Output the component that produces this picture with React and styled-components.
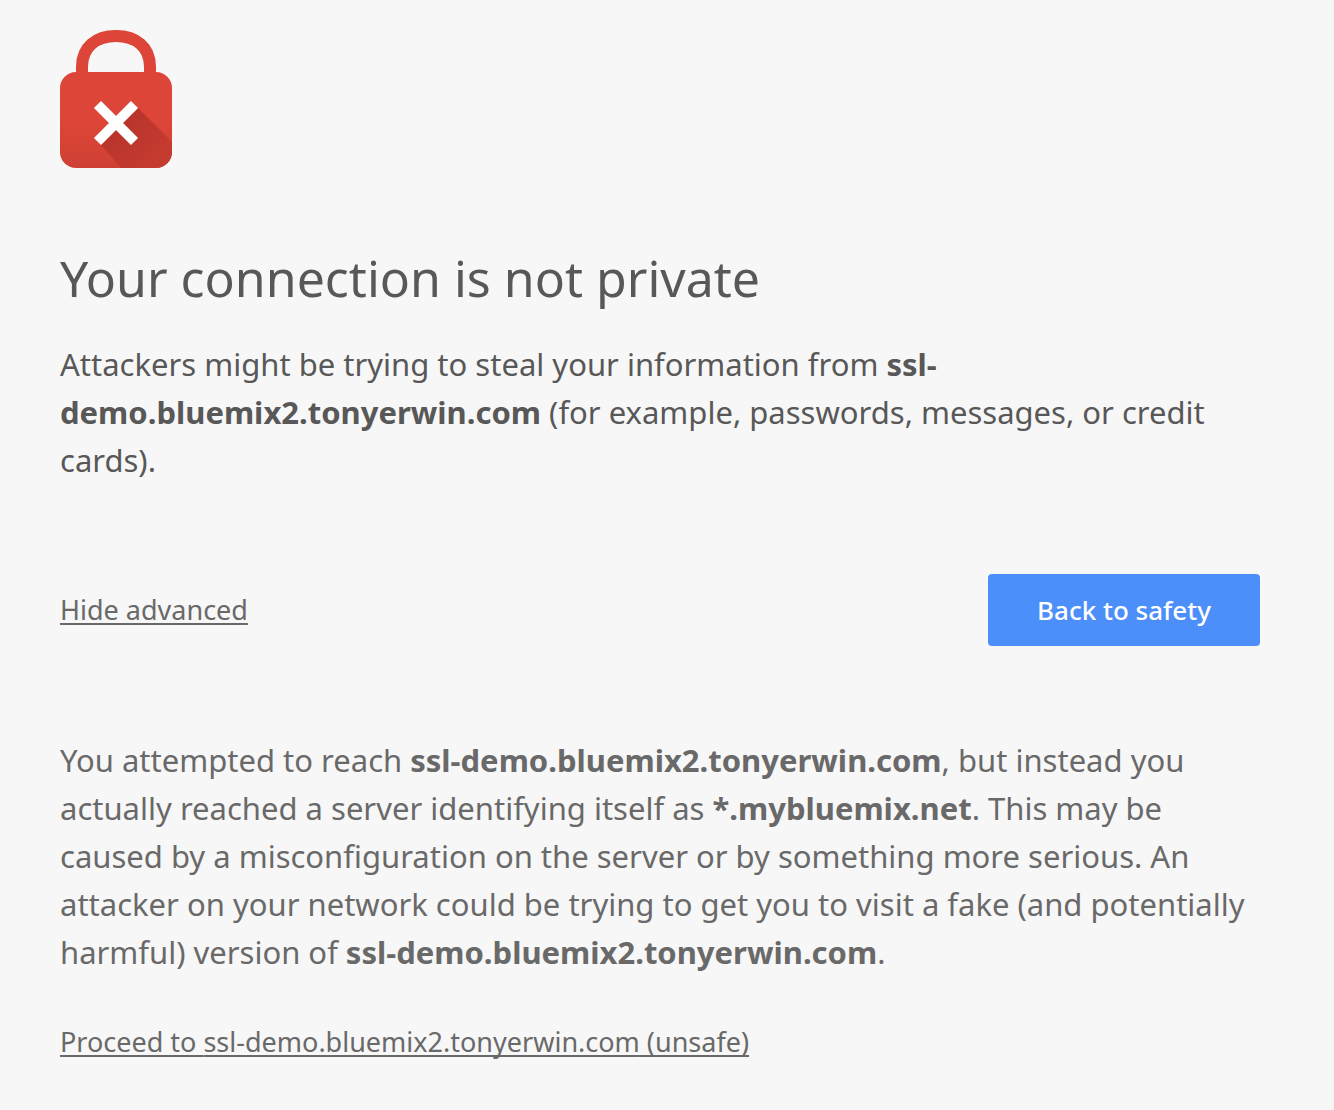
import React, { useState } from "react";
import styled, { createGlobalStyle, css } from "styled-components";

const GlobalStyle = createGlobalStyle`
  * {
    box-sizing: border-box;
  }

  body {
    margin: 0;
    background: #f7f7f7;
    color: #585858;
    font-family: "Noto Sans", "Open Sans", sans-serif;
    font-size: 31px;
    line-height: 48px;
  }
`;

const Page = styled.main`
  display: flex;
  flex-direction: column;
  align-items: flex-start;
  max-width: 1334px;
  padding: 30px 74px 40px 60px;
`;

const LockIcon = styled.svg`
  display: block;
  width: 112px;
  height: 138px;
`;

const Title = styled.h1`
  margin: 80px 0 32px;
  font-size: 50px;
  font-weight: 400;
  line-height: 60px;
`;

const Message = styled.p`
  margin: 0;
  color: ${({ $muted }) => ($muted ? "#696969" : "inherit")};
`;

const Actions = styled.div`
  display: flex;
  align-items: baseline;
  justify-content: space-between;
  align-self: stretch;
  margin: 90px 0;
`;

const linkText = css`
  color: #696969;
  font-size: 27px;
  text-decoration: underline;
  text-decoration-thickness: 2px;
  text-decoration-skip-ink: none;
  text-underline-offset: 3px;
`;

const TextButton = styled.button`
  padding: 0;
  border: 0;
  background: none;
  font: inherit;
  cursor: pointer;
  ${linkText}
`;

const PrimaryButton = styled.button`
  min-width: 272px;
  height: 72px;
  padding: 0 40px;
  border: 0;
  border-radius: 4px;
  background: #4c8efa;
  color: #fff;
  font: inherit;
  font-size: 26px;
  font-weight: 500;
  cursor: pointer;
`;

const Details = styled.section`
  display: flex;
  flex-direction: column;
  align-items: flex-start;
  gap: 42px;
`;

const ProceedLink = styled.a`
  ${linkText}
`;

const HOST = "ssl-demo.bluemix2.tonyerwin.com";

function BrokenLock() {
  return (
    <LockIcon viewBox="0 0 112 138" role="img" aria-label="Not secure">
      <defs>
        <linearGradient id="body" x1="0" y1="0" x2="0" y2="1">
          <stop offset="0.5" stopColor="#dd4538" />
          <stop offset="1" stopColor="#cf4034" />
        </linearGradient>
        <linearGradient id="shade" gradientUnits="userSpaceOnUse" x1="50" y1="90" x2="94" y2="134">
          <stop offset="0" stopColor="#b53329" />
          <stop offset="1" stopColor="#c63b30" />
        </linearGradient>
        <clipPath id="bodyClip">
          <rect y="42" width="112" height="96" rx="16" />
        </clipPath>
      </defs>
      <path
        d="M22 46V37C22 17 36 6 56 6s34 11 34 31v9"
        fill="none"
        stroke="#dd4538"
        strokeWidth="12"
      />
      <rect y="42" width="112" height="96" rx="16" fill="url(#body)" />
      <g clipPath="url(#bodyClip)">
        <path d="M78 78L114 114V140H63L41 115Z" fill="url(#shade)" />
      </g>
      <path d="M37.500 74.500L74.500 111.500M74.500 74.500L37.500 111.500" stroke="#fff" strokeWidth="10" />
    </LockIcon>
  );
}

export default function App() {
  const [open, setOpen] = useState(true);

  return (
    <>
      <GlobalStyle />
      <Page>
        <BrokenLock />
        <Title>Your connection is not private</Title>
        <Message>
          Attackers might be trying to steal your information from <strong>{HOST}</strong> (for
          example, passwords, messages, or credit cards).
        </Message>
        <Actions>
          <TextButton type="button" aria-expanded={open} onClick={() => setOpen(!open)}>
            {open ? "Hide advanced" : "Advanced"}
          </TextButton>
          <PrimaryButton type="button">Back to safety</PrimaryButton>
        </Actions>
        {open && (
          <Details>
            <Message $muted>
              You attempted to reach <strong>{HOST}</strong>, but instead you actually reached a
              server identifying itself as <strong>*.mybluemix.net</strong>. This may be caused by
              a misconfiguration on the server or by something more serious. An attacker on your
              network could be trying to get you to visit a fake (and potentially harmful) version
              of <strong>{HOST}</strong>.
            </Message>
            <ProceedLink href="#proceed">Proceed to {HOST} (unsafe)</ProceedLink>
          </Details>
        )}
      </Page>
    </>
  );
}
